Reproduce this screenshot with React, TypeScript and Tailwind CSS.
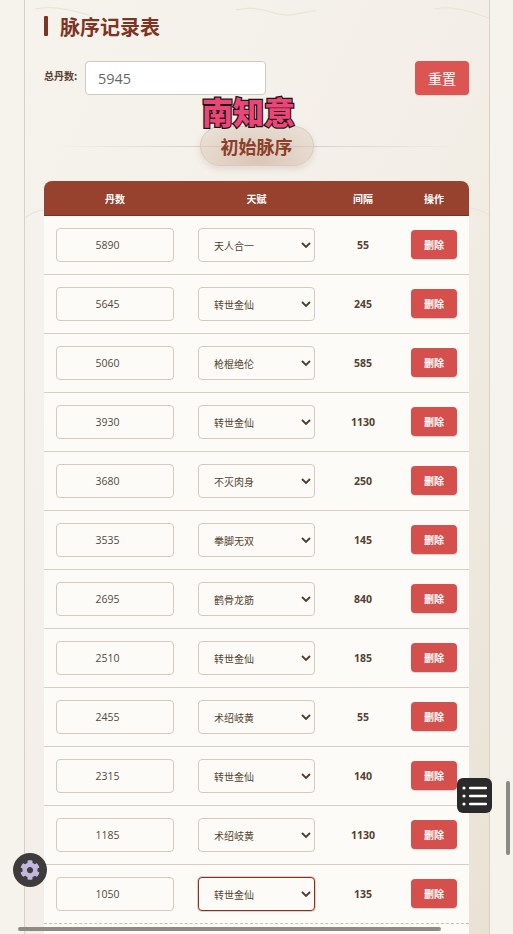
import { FaCog } from "react-icons/fa";

const CJK = "font-['Noto_Sans_CJK_SC','Open_Sans',sans-serif]";

const ROWS = [
  { pills: "5890", talent: "天人合一", gap: "55" },
  { pills: "5645", talent: "转世金仙", gap: "245" },
  { pills: "5060", talent: "枪棍绝伦", gap: "585" },
  { pills: "3930", talent: "转世金仙", gap: "1130" },
  { pills: "3680", talent: "不灭肉身", gap: "250" },
  { pills: "3535", talent: "拳脚无双", gap: "145" },
  { pills: "2695", talent: "鹤骨龙筋", gap: "840" },
  { pills: "2510", talent: "转世金仙", gap: "185" },
  { pills: "2455", talent: "术绍岐黄", gap: "55" },
  { pills: "2315", talent: "转世金仙", gap: "140" },
  { pills: "1185", talent: "术绍岐黄", gap: "1130" },
  { pills: "1050", talent: "转世金仙", gap: "135", focused: true },
];

const TALENTS = ["天人合一", "转世金仙", "枪棍绝伦", "不灭肉身", "拳脚无双", "鹤骨龙筋", "术绍岐黄"];

function Waves() {
  return (
    <svg aria-hidden="true" className="pointer-events-none absolute inset-0 h-full w-full" fill="none" stroke="#e9e2d5" strokeWidth="1">
      <path d="M10 9c20-4 38 2 54 6" />
      <path d="M211 10c22-6 36 5 50 5s24-5 30-4" />
      <path d="M410 9c18-4 36 3 54 9" />
      <path d="M0 218c8-6 14-8 20-8" />
      <path d="M445 208c8 1 14 4 20 7" />
    </svg>
  );
}

function TalentSelect({ value, focused }: { value: string; focused?: boolean }) {
  return (
    <div className="relative h-[34px] w-[117px]">
      <select
        defaultValue={value}
        className={`h-full w-full appearance-none rounded-[4px] bg-[#fdfbf8] pl-[15px] text-[10px] text-[#54432f] outline-none ${CJK} ${
          focused
            ? "border border-[#7f3322] shadow-[0_0_0_1px_#f0c9c0]"
            : "border border-[#d3cbc0]"
        }`}
      >
        {TALENTS.map((t) => (
          <option key={t}>{t}</option>
        ))}
      </select>
      <svg
        aria-hidden="true"
        viewBox="0 0 10 6"
        className="pointer-events-none absolute right-[4px] top-[14px] h-[6px] w-[10px]"
        fill="none"
        stroke="#4f3a2c"
        strokeWidth="1.8"
      >
        <path d="M1 1l4 4 4-4" />
      </svg>
    </div>
  );
}

function Row({ pills, talent, gap, focused }: { pills: string; talent: string; gap: string; focused?: boolean }) {
  return (
    <div
      className={`grid h-[59px] grid-cols-[142px_141px_72px_70px] items-center border-b bg-[#fdfbf8] ${
        focused ? "border-dashed border-[#cbc3b6]" : "border-[#d6cfc5]"
      }`}
    >
      <div className="flex justify-center">
        <input
          type="number"
          defaultValue={pills}
          className="h-[34px] w-[118px] rounded-[4px] border border-[#d3cbc0] bg-[#fdfbf8] text-center font-['Open_Sans',sans-serif] text-[10.5px] text-[#54493e] outline-none"
        />
      </div>
      <div className="flex justify-center">
        <TalentSelect value={talent} focused={focused} />
      </div>
      <div className="pt-[1px] text-center font-['Open_Sans',sans-serif] text-[10.5px] font-bold text-[#54412f]">{gap}</div>
      <div className="flex justify-center pb-[2px]">
        <button className={`h-[29px] w-[46px] rounded-[4px] bg-[#d5504d] text-[10px] font-bold text-white shadow-[0_1px_1px_rgba(0,0,0,0.15)] ${CJK}`}>
          删除
        </button>
      </div>
    </div>
  );
}

export default function App() {
  return (
    <div className={`relative h-[934px] w-[513px] overflow-hidden bg-[#f6f3ec] ${CJK}`}>
      <div className="relative ml-[24px] h-[934px] w-[466px] border-x border-[#d9d2c4] bg-gradient-to-br from-[#f6f3ed] via-[#f3efe8] to-[#e9e2d4] pl-[19px] pr-[20px] pt-[16px]">
        <Waves />

        <div className="relative flex h-[20px] items-center gap-[12px]">
          <div className="h-[20px] w-[4px] rounded-[1px] bg-[#7f3322]" />
          <h2 className="pt-[1px] text-[20px] font-bold leading-none text-[#7f3322]">脉序记录表</h2>
        </div>

        <div className="relative mt-[25px] flex h-[34px] items-center justify-between">
          <div className="flex items-center">
            <span className="mb-[5px] w-[41px] text-[10px] font-bold text-[#5a4030]">总丹数:</span>
            <input
              defaultValue="5945"
              className="h-[34px] w-[181px] rounded-[4px] border border-[#cfc9c0] bg-white pl-[12px] font-['Open_Sans',sans-serif] text-[14.5px] text-[#666] outline-none"
            />
          </div>
          <button className="h-[34px] w-[54px] rounded-[4px] bg-[#dc5552] text-[14px] text-white shadow-[0_1px_1px_rgba(0,0,0,0.1)]">
            重置
          </button>
        </div>

        <div className="relative mt-[31px] flex h-[40px] items-center justify-center">
          <div className="absolute inset-x-[10px] top-[20px] h-px bg-gradient-to-r from-transparent via-[#cdc4b6] to-transparent" />
          <div className="relative flex h-[40px] w-[114px] items-center justify-center rounded-full border border-[#d8cbbd] bg-[radial-gradient(ellipse_at_50%_90%,rgba(190,145,120,0.45),rgba(228,218,205,0.6))] text-[18px] font-bold text-[#8b3f2a] shadow-[0_3px_6px_rgba(120,80,50,0.14)]">
            初始脉序
          </div>
        </div>

        <div className="relative mt-[15px] w-[425px]">
          <div className="grid h-[35px] grid-cols-[142px_141px_72px_70px] items-center rounded-t-[8px] border-b border-[#7f2f1e] bg-[#97422f] text-center text-[10px] font-bold text-white">
            <span>丹数</span>
            <span>天赋</span>
            <span>间隔</span>
            <span>操作</span>
          </div>
          {ROWS.map((row) => (
            <Row key={row.pills} {...row} />
          ))}
          <div className="h-[59px] bg-[#fdfbf8]" />
        </div>
      </div>

      {/* overlays */}
      <div className="pointer-events-none absolute left-[202px] top-[91px] text-[31px] font-black leading-[40px] text-[#ec4678] [-webkit-text-stroke:2.5px_#1c1518] [paint-order:stroke_fill]">
        南知意
      </div>

      <button className="absolute left-[13px] top-[853px] flex h-[34px] w-[34px] items-center justify-center rounded-full bg-[#3d3b3b]">
        <FaCog className="h-[20px] w-[20px] text-[#c2b7de]" />
      </button>

      <button className="absolute left-[457px] top-[778px] flex h-[35px] w-[35px] items-center justify-center rounded-[6px] bg-[#2a2a2a]">
        <svg viewBox="0 0 26 22" className="h-[22px] w-[26px]" fill="#fff">
          <circle cx="2" cy="3" r="1.6" />
          <circle cx="2" cy="11" r="1.6" />
          <circle cx="2" cy="19" r="1.6" />
          <rect x="7" y="1.8" width="18" height="2.4" rx="1" />
          <rect x="7" y="9.8" width="18" height="2.4" rx="1" />
          <rect x="7" y="17.8" width="18" height="2.4" rx="1" />
        </svg>
      </button>

      {/* scrollbars */}
      <div className="absolute bottom-[3px] left-[18px] h-[4px] w-[423px] rounded-full bg-[#8f8b82]" />
      <div className="absolute left-[506px] top-[781px] h-[74px] w-[4px] rounded-full bg-[#8a8a85]" />
    </div>
  );
}
